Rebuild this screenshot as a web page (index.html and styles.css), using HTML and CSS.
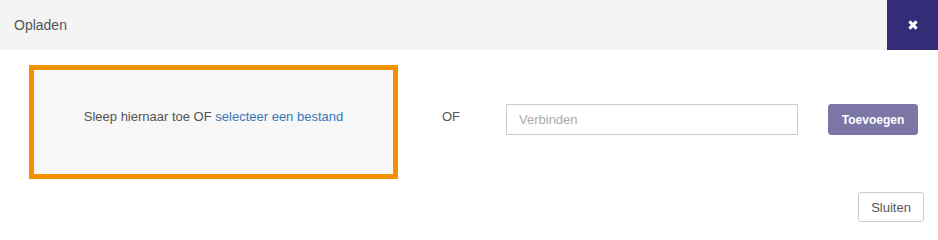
FILE: index.html
```html
<!DOCTYPE html>
<html>
<head>
<meta charset="utf-8">
<link rel="stylesheet" href="styles.css">
</head>
<body>
<div class="modal">
  <div class="modal-header">
    <div class="modal-title">Opladen</div>
    <button class="close-btn" type="button" aria-label="Sluiten">
      <svg width="10" height="10" viewBox="0 0 10 10"><path d="M1.4 1.4 L8.6 8.6 M8.6 1.4 L1.4 8.6" stroke="#fff" stroke-width="3" stroke-linecap="butt"/></svg>
    </button>
  </div>
  <div class="modal-body">
    <div class="dropzone">
      <span>Sleep hiernaar toe OF <a class="link" href="#">selecteer een bestand</a></span>
    </div>
    <div class="or">OF</div>
    <input class="url-input" type="text" placeholder="Verbinden">
    <button class="btn-add" type="button">Toevoegen</button>
  </div>
  <div class="modal-footer">
    <button class="btn-close" type="button">Sluiten</button>
  </div>
</div>
</body>
</html>
```

FILE: styles.css
```css
* { box-sizing: border-box; }
html, body { margin: 0; padding: 0; background: #fff; }
body { font-family: "Liberation Sans", Arial, sans-serif; color: #555; width: 938px; height: 237px; overflow: hidden; }

.modal-header {
  height: 50px;
  background: #f4f4f4;
  display: flex;
  align-items: center;
  justify-content: space-between;
}
.modal-title { font-size: 14px; line-height: 20px; padding-left: 14px; color: #555; }
.close-btn {
  width: 51px; height: 50px;
  border: 0; margin: 0; padding: 0;
  background: #352c77;
  display: flex; align-items: center; justify-content: center;
  cursor: pointer;
}
.close-btn svg { display: block; margin-left: 1px; }

.modal-body {
  display: flex;
  align-items: flex-start;
  padding: 15px 0 0 29px;
}
.dropzone {
  width: 369px; height: 114px;
  border: 5px solid #f39200;
  background: #f7f7f7;
  font-size: 13px; line-height: 18px;
  text-align: center;
  padding-top: 38px;
  color: #555;
}
.link { color: #337ab7; text-decoration: none; }
.or {
  margin: 43px 0 0 44px;
  width: 17px;
  font-size: 13px; line-height: 18px;
  color: #555;
  white-space: nowrap;
}
.url-input {
  margin: 39px 0 0 47px;
  width: 292px; height: 31px;
  border: 1px solid #ccc;
  border-radius: 0;
  padding: 0 12px;
  font-family: "Liberation Sans", Arial, sans-serif;
  font-size: 13px;
  color: #555;
  outline: none;
}
.url-input::placeholder { color: #aaa; }
.btn-add {
  margin: 39px 0 0 30px;
  width: 90px; height: 31px;
  border: 1px solid #7c76a7;
  border-radius: 3px;
  background: #7c76a7;
  color: #fff;
  font-family: "Liberation Sans", Arial, sans-serif;
  font-size: 12px; font-weight: bold;
  padding: 0;
}

.modal-footer {
  display: flex;
  justify-content: flex-end;
  padding: 13px 14px 0 0;
}
.btn-close {
  width: 66px; height: 30px;
  border: 1px solid #ccc;
  border-radius: 3px;
  background: #fff;
  color: #555;
  font-family: "Liberation Sans", Arial, sans-serif;
  font-size: 13px;
  padding: 0;
}
```
